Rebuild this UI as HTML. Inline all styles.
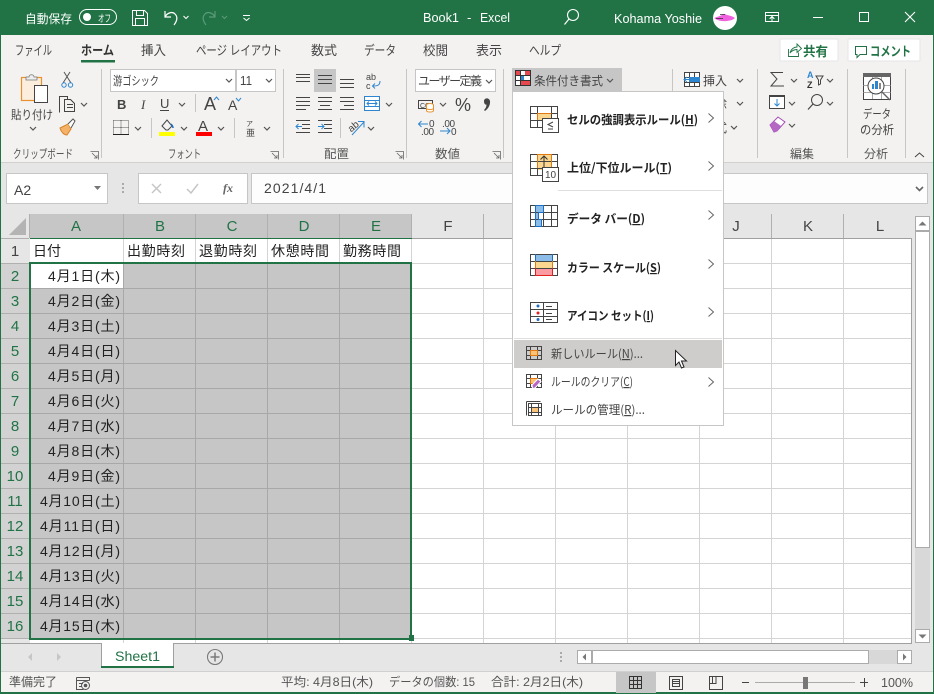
<!DOCTYPE html>
<html><head><meta charset="utf-8"><style>
html,body{margin:0;padding:0;background:#fff;overflow:hidden}
svg{display:block;position:absolute;left:0;top:0}
text{font-family:"Liberation Sans","Noto Sans CJK JP",sans-serif;fill:#444;font-size:12px}
.r{shape-rendering:crispEdges}
.c{font-size:14px;fill:#222}
.h{font-size:15px;fill:#444;text-anchor:middle}
.s{fill:#217346}
.w{fill:#fff}
.m{fill:#222;font-weight:bold;font-size:12px;font-family:"Noto Sans CJK JP",sans-serif}
.n{fill:#444;font-size:12px;font-family:"Noto Sans CJK JP",sans-serif}
.u{text-decoration:underline}
.l{fill:#555;font-size:12px}
.ln{fill:none;stroke:#444;stroke-width:1;shape-rendering:crispEdges}
.ch{fill:none;stroke:#555;stroke-width:1.2}
.gr{stroke:#d4d4d4;stroke-width:1;shape-rendering:crispEdges}
.gs{stroke:#a8a8a8;stroke-width:1;shape-rendering:crispEdges}
</style></head><body>
<svg width="934" height="694" viewBox="0 0 934 694" xmlns="http://www.w3.org/2000/svg">
<!-- backgrounds -->
<rect class="r" width="934" height="694" fill="#217346"/>
<rect class="r" x="1" y="35" width="932" height="128" fill="#f3f2f1"/>
<rect class="r" x="1" y="162" width="932" height="1" fill="#d2d0ce"/>
<rect class="r" x="1" y="163" width="932" height="508" fill="#e6e6e6"/>
<rect class="r" x="1" y="671" width="932" height="21" fill="#f3f2f1"/>
<rect class="r" x="1" y="671" width="932" height="1" fill="#d0d0d0"/>

<!-- title bar -->
<text x="25" y="23" class="w" textLength="47" lengthAdjust="spacingAndGlyphs" style="font-size:12px">自動保存</text>
<rect x="79.500" y="9.500" width="37" height="15" rx="7.500" fill="none" stroke="#fff"/>
<circle cx="87" cy="17" r="4" fill="#fff"/>
<text x="98" y="22" class="w" style="font-size:10px" textLength="13" lengthAdjust="spacingAndGlyphs">オフ</text>
<path d="M132.500 10.500h12l3 3v12h-15zM136.500 10.500v5h7v-5M135.500 25.500v-7h9v7" fill="none" stroke="#fff"/>
<path d="M165 11v6h6M165 17c2-4 7-6 10-3 3 3 2 7-1 11" fill="none" stroke="#fff" stroke-width="1.200"/>
<path d="M183.500 16l2.500 2.500 2.500-2.500" fill="none" stroke="#fff"/>
<path d="M215 11v6h-6M215 17c-2-4-7-6-10-3-3 3-2 7 1 11" fill="none" stroke="#5a9a78" stroke-width="1.200"/>
<path d="M222 16l2.500 2.500 2.500-2.500" fill="none" stroke="#5a9a78"/>
<path d="M243 15.500h7M243.500 18l3 2.500 3-2.500" fill="none" stroke="#fff"/>
<text x="423" y="22" class="w" style="font-size:13px" textLength="36" lengthAdjust="spacingAndGlyphs">Book1</text>
<text x="467" y="22" class="w" style="font-size:13px">-</text>
<text x="480" y="22" class="w" style="font-size:13px" textLength="30" lengthAdjust="spacingAndGlyphs">Excel</text>
<circle cx="573" cy="15" r="5.500" fill="none" stroke="#fff" stroke-width="1.100"/><path d="M569 19l-4.500 5.500" stroke="#fff" stroke-width="1.200"/>
<text x="614" y="23" class="w" style="font-size:13px" textLength="88" lengthAdjust="spacingAndGlyphs">Kohama Yoshie</text>
<circle cx="725" cy="18" r="12" fill="#fff"/>
<path d="M714 18c3-1 6-2 8-3 2-1.500 3-1 5 0 3 .5 6 1.500 8 3-2 2-5 2.500-8 3-4 .5-9 0-13-3z" fill="#ef5fe0"/>
<path d="M716 18.500h7M720 14.500h5" stroke="#333" stroke-width=".7"/>
<path class="r" d="M765.500 12.500h13v9h-13zM765.500 15.500h13M772 21v-4M769.500 19l2.500-2.500 2.500 2.500" fill="none" stroke="#fff"/>
<path class="r" d="M813 17.500h10" stroke="#fff"/>
<rect class="r" x="859.500" y="12.500" width="9" height="9" fill="none" stroke="#fff"/>
<path d="M905 12l10 10M915 12l-10 10" stroke="#fff" stroke-width="1.100"/>

<!-- tabs -->
<text x="15" y="55" style="font-size:13px" textLength="37" lengthAdjust="spacingAndGlyphs">ファイル</text>
<text x="81" y="55" style="font-size:13px;font-weight:bold;fill:#333" textLength="33" lengthAdjust="spacingAndGlyphs">ホーム</text>
<rect class="r" x="81" y="60" width="34" height="2.500" fill="#217346"/>
<text x="141" y="55" style="font-size:13px" textLength="25" lengthAdjust="spacingAndGlyphs">挿入</text>
<text x="196" y="55" style="font-size:13px" textLength="86" lengthAdjust="spacingAndGlyphs">ページ レイアウト</text>
<text x="311" y="55" style="font-size:13px" textLength="26" lengthAdjust="spacingAndGlyphs">数式</text>
<text x="364" y="55" style="font-size:13px" textLength="32" lengthAdjust="spacingAndGlyphs">データ</text>
<text x="423" y="55" style="font-size:13px" textLength="25" lengthAdjust="spacingAndGlyphs">校閲</text>
<text x="476" y="55" style="font-size:13px" textLength="26" lengthAdjust="spacingAndGlyphs">表示</text>
<text x="529" y="55" style="font-size:13px" textLength="32" lengthAdjust="spacingAndGlyphs">ヘルプ</text>
<rect x="780" y="39" width="58" height="22" rx="1" fill="#fff" stroke="#e6e6e6"/>
<rect x="848" y="39" width="72" height="22" rx="1" fill="#fff" stroke="#e6e6e6"/>
<path d="M788.500 49v7.500h10v-4M790 53c1-4 4-6 7-6v-3l4.500 4.500-4.500 4v-3c-3 0-5 1-7 3.500z" fill="none" stroke="#217346" stroke-width=".9"/>
<text x="803" y="56" style="font-size:13px;font-weight:bold;fill:#217346" textLength="25" lengthAdjust="spacingAndGlyphs">共有</text>
<path d="M855.500 46.500h11v8h-6.500l-3 3v-3h-1.500z" fill="none" stroke="#217346"/>
<text x="870" y="56" style="font-size:13px;font-weight:bold;fill:#217346" textLength="41" lengthAdjust="spacingAndGlyphs">コメント</text>

<!-- ribbon separators -->
<g class="r" fill="#c8c6c4">
<rect x="101" y="69" width="1" height="89"/><rect x="283" y="69" width="1" height="89"/><rect x="406" y="69" width="1" height="89"/><rect x="503" y="69" width="1" height="89"/><rect x="672" y="69" width="1" height="89"/><rect x="757" y="69" width="1" height="89"/><rect x="847" y="69" width="1" height="89"/><rect x="905" y="69" width="1" height="89"/>
<rect x="195" y="94" width="1" height="18"/><rect x="151" y="118" width="1" height="20"/><rect x="234" y="118" width="1" height="20"/><rect x="340" y="118" width="1" height="20"/>
</g>
<!-- clipboard -->
<rect x="21.500" y="77.500" width="20" height="23" fill="#fbeedd" stroke="#e8912d" stroke-width="1.200"/>
<path d="M26 80v-3h3c0-3 5-3 5 0h3v3z" fill="#eee" stroke="#777" stroke-width=".8"/>
<rect class="r" x="34.500" y="85.500" width="13" height="17" fill="#fff" stroke="#444"/>
<text x="11" y="119" fill="#444" textLength="42" lengthAdjust="spacingAndGlyphs">貼り付け</text>
<path class="ch" d="M30 127l3 3 3-3"/>
<path d="M64 72l7 11M70 72l-7 11" stroke="#555" fill="none"/><circle cx="64" cy="85" r="2.200" fill="none" stroke="#2e86d0"/><circle cx="70.500" cy="85" r="2.200" fill="none" stroke="#2e86d0"/>
<path class="ln" d="M59.500 112.500v-16h8v3M64.500 99.500h6l4 4v8h-10zM67 104.500h6M67 107.500h6"/>
<path class="ch" d="M81 103l3 3 3-3"/>
<path d="M60 128l8-4 3 5-4 6c-3 0-6-3-7-7z" fill="#f3b267" stroke="#d9822b"/><path d="M68 124l5-5 2 2-4 7" fill="#fff" stroke="#555"/>
<text x="13" y="158" class="l" textLength="60" lengthAdjust="spacingAndGlyphs">クリップボード</text>
<path d="M90.500 151.500h8v8M92 153l5 5M97 155v3h-3" fill="none" stroke="#666" stroke-width=".8"/>

<!-- font group -->
<rect class="r" x="110.500" y="69.500" width="125" height="22" fill="#fff" stroke="#c6c6c6"/>
<rect class="r" x="236.500" y="69.500" width="39" height="22" fill="#fff" stroke="#c6c6c6"/>
<text x="113" y="85" fill="#333" textLength="46" lengthAdjust="spacingAndGlyphs">游ゴシック</text>
<path class="ch" d="M226 79l3 3 3-3M266 79l3 3 3-3"/>
<text x="240" y="85" fill="#333" style="font-size:13px" textLength="12" lengthAdjust="spacingAndGlyphs">11</text>
<text x="117" y="109" style="font-size:13px;font-weight:bold">B</text>
<text x="141" y="109" style="font-size:13px;font-style:italic;font-family:'Liberation Serif'">I</text>
<text x="160" y="108" style="font-size:13px">U</text><rect class="r" x="160" y="110" width="9" height="1" fill="#444"/>
<path class="ch" d="M179 103l3 3 3-3"/>
<text x="204" y="110" style="font-size:18px" fill="#444">A</text>
<path d="M214 100l2.500-3 2.500 3" fill="none" stroke="#2e86d0"/>
<text x="228" y="110" style="font-size:14px">A</text>
<path d="M236 98l2.500 3 2.500-3" fill="none" stroke="#2e86d0"/>
<path d="M113.500 120.500h15v13.500M113.500 120.500v13M121 120.500v13M113.500 127.500h15" fill="none" stroke="#555" stroke-dasharray="1 1" class="r"/>
<rect class="r" x="113" y="134" width="16" height="1" fill="#222"/>
<path class="ch" d="M135 127l3 3 3-3"/>
<path d="M162 126l5-6 5 6-4 4h-2z" fill="none" stroke="#444"/><path d="M171 124c1 1 2 2 2 4" stroke="#1b6ec2" stroke-width="1.500" fill="none"/>
<rect class="r" x="159" y="132" width="16" height="4" fill="#ffff00"/>
<path class="ch" d="M181 127l3 3 3-3"/>
<text x="198" y="131" style="font-size:15px" fill="#444">A</text>
<rect class="r" x="196" y="132" width="16" height="4" fill="#ff0000"/>
<path class="ch" d="M218 127l3 3 3-3"/>
<text x="246" y="126" style="font-size:7px" fill="#888">ア</text><text x="246" y="136" style="font-size:9px" fill="#888">亜</text>
<path class="ch" d="M264 127l3 3 3-3"/>
<text x="168" y="158" class="l" textLength="33" lengthAdjust="spacingAndGlyphs">フォント</text>
<path d="M270.500 151.500h8v8M272 153l5 5M277 155v3h-3" fill="none" stroke="#666" stroke-width=".8"/>

<!-- align group -->
<rect class="r" x="314" y="69" width="22" height="23" fill="#c6c6c6"/>
<path class="ln" d="M296 74.500h14M296 77.500h14M296 81.500h14"/>
<path class="ln" d="M318 75.500h14M318 79.500h14M318 83.500h14"/>
<path class="ln" d="M340 79.500h14M340 83.500h14M340 87.500h14"/>
<text x="366" y="80" style="font-size:9px" fill="#444">ab</text><text x="366" y="89" style="font-size:9px" fill="#444">c</text>
<path d="M380 81c0 4-2 5-7 5M375 83.500l-2.500 2.500 2.500 2.500" fill="none" stroke="#2e86d0"/>
<path class="ln" d="M296 97.500h14M296 101.500h14M296 105.500h14M296 109.500h10"/>
<path class="ln" d="M318 97.500h14M318 101.500h14M320 105.500h10M318 109.500h14"/>
<path class="ln" d="M340 97.500h14M340 101.500h14M344 105.500h10M340 109.500h14"/>
<path class="r" d="M364.500 96.500h15v14h-15zM364.500 100.500h15M364.500 106.500h15" fill="#fff" stroke="#2e86d0"/>
<path d="M367 103.500h10M369 101.500l-2 2 2 2M375 101.500l2 2-2 2" fill="none" stroke="#2e86d0"/>
<path class="ch" d="M386 103l3 3 3-3"/>
<path class="ln" d="M296 120.500h14M302 124.500h8M302 128.500h8M296 132.500h14"/><path d="M302 126.500h-6M298.500 124l-2.500 2.500 2.500 2.500" fill="none" stroke="#2e86d0"/>
<path class="ln" d="M318 120.500h14M324 124.500h8M324 128.500h8M318 132.500h14"/><path d="M318 126.500h6M321.500 124l2.500 2.500-2.500 2.500" fill="none" stroke="#2e86d0"/>
<text x="348" y="130" style="font-size:10px" transform="rotate(-40 353 127)" fill="#444">ab</text>
<path d="M352 135l12-13M358 121.500h6v6" fill="none" stroke="#2e86d0"/>
<path class="ch" d="M368 127l3 3 3-3"/>
<text x="324" y="158" class="l" textLength="25" lengthAdjust="spacingAndGlyphs">配置</text>
<path d="M395.500 151.500h8v8M397 153l5 5M402 155v3h-3" fill="none" stroke="#666" stroke-width=".8"/>

<!-- number group -->
<rect class="r" x="415.500" y="69.500" width="80" height="22" fill="#fff" stroke="#c6c6c6"/>
<text x="418" y="85" fill="#333" textLength="64" lengthAdjust="spacing">ユーザー定義</text>
<path class="ch" d="M486 80l3 3 3-3"/>
<rect class="r" x="418.500" y="100.500" width="14" height="8" fill="none" stroke="#444"/>
<text x="420" y="108" style="font-size:7px" fill="#333">CC</text>
<ellipse cx="430" cy="105" rx="3.500" ry="1.500" fill="#fff" stroke="#e8912d"/><path d="M426.500 105v5.500c0 2 7 2 7 0v-5.500M426.500 108c0 2 7 2 7 0" fill="#fff" stroke="#e8912d"/>
<path class="ch" d="M440 103l3 3 3-3"/>
<text x="455" y="111" style="font-size:18px" fill="#444">%</text>
<path d="M484 101c0-3 5-4 6 0 .5 4-2 8-5 10l-1-1c1.500-1.500 2.500-3 2.500-5.500-1.500.5-2.500-1-2.500-3.500z" fill="#444"/>
<path d="M428 124h-9M421.500 121l-3 3 3 3" fill="none" stroke="#2e86d0"/>
<text x="429" y="127" style="font-size:10px" fill="#444">0</text>
<text x="421" y="135" style="font-size:10px" fill="#444" textLength="13">.00</text>
<text x="442" y="127" style="font-size:10px" fill="#444" textLength="13">.00</text>
<path d="M440 131h10M447 128l3 3-3 3" fill="none" stroke="#2e86d0"/>
<text x="451" y="135" style="font-size:10px" fill="#444">0</text>
<text x="435" y="158" class="l" textLength="25" lengthAdjust="spacingAndGlyphs">数値</text>
<path d="M492.500 151.500h8v8M494 153l5 5M499 155v3h-3" fill="none" stroke="#666" stroke-width=".8"/>

<!-- right groups -->
<path class="r" d="M684.500 72.500h15v14h-15zM684.500 77.500h15M684.500 82.500h15M689.500 72.500v14M694.500 72.500v14" fill="#fff" stroke="#444"/>
<rect class="r" x="689" y="77" width="11" height="5" fill="#2e86d0"/><path d="M691 79.500h-7M687 77l-3 2.500 3 2.500" fill="none" stroke="#2e86d0"/>
<text x="703" y="85" fill="#444" textLength="24" lengthAdjust="spacingAndGlyphs">挿入</text>
<text x="703" y="108" fill="#444" textLength="24" lengthAdjust="spacingAndGlyphs">削除</text>
<text x="703" y="132" fill="#444" textLength="24" lengthAdjust="spacingAndGlyphs">書式</text>
<path class="ch" d="M737 79l3 3 3-3M737 102l3 3 3-3M731 126l3 3 3-3"/>
<path d="M783 72.500h-12l6 6.500-6 7h13" fill="none" stroke="#444"/>
<path class="ch" d="M791 79l3 3 3-3"/>
<text x="807" y="78" style="font-size:9px;font-weight:bold;fill:#2e86d0">A</text>
<text x="807" y="88" style="font-size:9px;font-weight:bold;fill:#333">Z</text>
<path d="M816 76h7l-2.500 4v4l-2 1v-5z" fill="none" stroke="#444"/>
<path class="ch" d="M827 79l3 3 3-3"/>
<rect class="r" x="769.500" y="95.500" width="15" height="13" fill="#fff" stroke="#444"/><rect class="r" x="769" y="95" width="16" height="2" fill="#444"/>
<path d="M777 99v7M774.500 103.500l2.500 2.500 2.500-2.500" fill="none" stroke="#2e86d0"/>
<path class="ch" d="M789 102l3 3 3-3"/>
<circle cx="817" cy="100" r="5.500" fill="none" stroke="#444"/><path d="M813 104l-5 5.500" stroke="#444" stroke-width="1.200"/>
<path class="ch" d="M827 102l3 3 3-3"/>
<path d="M770 125l8-8 7 5-8 9-3 1z" fill="#fff" stroke="#a74fb8"/><path d="M770 125l4-4 7 5-4 5-3 1z" fill="#b468c4"/>
<path class="ch" d="M789 124l3 3 3-3"/>
<text x="790" y="158" class="l" textLength="24" lengthAdjust="spacingAndGlyphs">編集</text>
<rect class="r" x="863.500" y="73.500" width="27" height="26" fill="#fff" stroke="#444"/><rect class="r" x="863" y="73" width="28" height="4" fill="#666"/>
<path class="r" d="M863.500 85.500h27M863.500 92.500h27M872.500 77v22M881.500 77v22" stroke="#aaa" fill="none"/>
<circle cx="876" cy="86" r="8" fill="#fff" stroke="#444"/><path d="M882 92l8 8" stroke="#666" stroke-width="1.500"/>
<rect class="r" x="872" y="84" width="2" height="5" fill="#2e86d0"/><rect class="r" x="875" y="81" width="3" height="8" fill="#2e86d0"/><rect class="r" x="879" y="83" width="2" height="6" fill="#888"/>
<text x="863" y="118" fill="#444" textLength="28" lengthAdjust="spacingAndGlyphs">データ</text>
<text x="860" y="134" fill="#444" textLength="34" lengthAdjust="spacingAndGlyphs">の分析</text>
<text x="864" y="158" class="l" textLength="24" lengthAdjust="spacingAndGlyphs">分析</text>
<path d="M915 157l4.500-4 4.500 4" fill="none" stroke="#444"/>

<!-- formula bar -->
<rect class="r" x="6.500" y="173.500" width="101" height="30" fill="#fff" stroke="#c6c6c6"/>
<rect class="r" x="138.500" y="173.500" width="109" height="30" fill="#fff" stroke="#c6c6c6"/>
<rect class="r" x="251.500" y="173.500" width="676" height="30" fill="#fdfdfd" stroke="#c6c6c6"/>
<text x="14" y="195" style="font-size:14px" fill="#444">A2</text>
<path d="M94 186h7l-3.500 4z" fill="#777"/>
<g class="r" fill="#aaa"><rect x="122" y="183" width="2" height="2"/><rect x="122" y="187" width="2" height="2"/><rect x="122" y="191" width="2" height="2"/></g>
<path d="M152 184l9 9M161 184l-9 9" stroke="#c6c6c6" stroke-width="1.500"/>
<path d="M187 189l4 4 7-9" fill="none" stroke="#c6c6c6" stroke-width="1.500"/>
<text x="223" y="192" style="font-size:12px;font-style:italic;font-weight:bold;font-family:'Liberation Serif';fill:#666">fx</text>
<text x="264" y="193" style="font-size:14px" fill="#666" textLength="62" lengthAdjust="spacing">2021/4/1</text>
<path d="M916 187l3.500 3.500 3.500-3.500" fill="none" stroke="#666" stroke-width="1.600"/>

<!-- headers -->
<path d="M26 218v17H9z" fill="#b4b4b4"/>
<rect class="r" x="30" y="214" width="382" height="24" fill="#c6c6c6"/>
<rect class="r" x="1" y="264" width="28" height="375" fill="#d2d2d2"/>
<g class="r" fill="#b0b0b0">
<rect x="29" y="214" width="1" height="24"/><rect x="123" y="214" width="1" height="24"/><rect x="195" y="214" width="1" height="24"/><rect x="267" y="214" width="1" height="24"/><rect x="339" y="214" width="1" height="24"/><rect x="411" y="214" width="1" height="24"/><rect x="483" y="214" width="1" height="24"/><rect x="555" y="214" width="1" height="24"/><rect x="627" y="214" width="1" height="24"/><rect x="699" y="214" width="1" height="24"/><rect x="771" y="214" width="1" height="24"/><rect x="843" y="214" width="1" height="24"/>
<rect x="1" y="238" width="28" height="1"/><rect x="1" y="263" width="28" height="1"/><rect x="1" y="288" width="28" height="1"/><rect x="1" y="313" width="28" height="1"/><rect x="1" y="338" width="28" height="1"/><rect x="1" y="363" width="28" height="1"/><rect x="1" y="388" width="28" height="1"/><rect x="1" y="413" width="28" height="1"/><rect x="1" y="438" width="28" height="1"/><rect x="1" y="463" width="28" height="1"/><rect x="1" y="488" width="28" height="1"/><rect x="1" y="513" width="28" height="1"/><rect x="1" y="538" width="28" height="1"/><rect x="1" y="563" width="28" height="1"/><rect x="1" y="588" width="28" height="1"/><rect x="1" y="613" width="28" height="1"/><rect x="1" y="638" width="28" height="1"/>
</g>
<text x="76" y="231" class="h s">A</text><text x="160" y="231" class="h s">B</text><text x="232" y="231" class="h s">C</text><text x="304" y="231" class="h s">D</text><text x="376" y="231" class="h s">E</text>
<text x="448" y="231" class="h">F</text><text x="520" y="231" class="h">G</text><text x="592" y="231" class="h">H</text><text x="664" y="231" class="h">I</text><text x="736" y="231" class="h">J</text><text x="808" y="231" class="h">K</text><text x="880" y="231" class="h">L</text>
<text x="15" y="256" class="h">1</text>
<text x="15" y="281" class="h s">2</text><text x="15" y="306" class="h s">3</text><text x="15" y="331" class="h s">4</text><text x="15" y="356" class="h s">5</text><text x="15" y="381" class="h s">6</text><text x="15" y="406" class="h s">7</text><text x="15" y="431" class="h s">8</text><text x="15" y="456" class="h s">9</text><text x="15" y="481" class="h s">10</text><text x="15" y="506" class="h s">11</text><text x="15" y="531" class="h s">12</text><text x="15" y="556" class="h s">13</text><text x="15" y="581" class="h s">14</text><text x="15" y="606" class="h s">15</text><text x="15" y="631" class="h s">16</text>

<!-- sheet -->
<rect class="r" x="30" y="239" width="882" height="404" fill="#fff"/>
<g class="gr">
<path d="M123.500 239V643M195.500 239V643M267.500 239V643M339.500 239V643M411.500 239V643M483.500 239V643M555.500 239V643M627.500 239V643M699.500 239V643M771.500 239V643M843.500 239V643"/>
<path d="M30 263.500H911M30 288.500H911M30 313.500H911M30 338.500H911M30 363.500H911M30 388.500H911M30 413.500H911M30 438.500H911M30 463.500H911M30 488.500H911M30 513.500H911M30 538.500H911M30 563.500H911M30 588.500H911M30 613.500H911M30 638.500H911"/>
</g>
<rect class="r" x="30" y="264" width="380" height="374" fill="#c6c6c6"/>
<rect class="r" x="31" y="264" width="92" height="24" fill="#fff"/>
<g class="gs">
<path d="M123.500 264V638M195.500 264V638M267.500 264V638M339.500 264V638"/>
<path d="M124 288.500H410M30 313.500H410M30 338.500H410M30 363.500H410M30 388.500H410M30 413.500H410M30 438.500H410M30 463.500H410M30 488.500H410M30 513.500H410M30 538.500H410M30 563.500H410M30 588.500H410M30 613.500H410M30 288.500H123"/>
</g>
<rect class="r" x="911" y="238" width="1" height="405" fill="#a0a0a0"/>
<rect class="r" x="30" y="238" width="882" height="1" fill="#a0a0a0"/>
<rect class="r" x="1" y="643" width="911" height="1" fill="#a0a0a0"/>
<rect class="r" x="30" y="238" width="382" height="1" fill="#217346"/>

<text x="33" y="256" class="c" textLength="28">日付</text>
<text x="127" y="256" class="c" textLength="58" lengthAdjust="spacing">出勤時刻</text>
<text x="199" y="256" class="c" textLength="58" lengthAdjust="spacing">退勤時刻</text>
<text x="271" y="256" class="c" textLength="58" lengthAdjust="spacing">休憩時間</text>
<text x="343" y="256" class="c" textLength="58" lengthAdjust="spacing">勤務時間</text>
<text x="48" y="281" class="c" textLength="72" lengthAdjust="spacing">4月1日(木)</text>
<text x="48" y="306" class="c" textLength="72" lengthAdjust="spacing">4月2日(金)</text>
<text x="48" y="331" class="c" textLength="72" lengthAdjust="spacing">4月3日(土)</text>
<text x="48" y="356" class="c" textLength="72" lengthAdjust="spacing">4月4日(日)</text>
<text x="48" y="381" class="c" textLength="72" lengthAdjust="spacing">4月5日(月)</text>
<text x="48" y="406" class="c" textLength="72" lengthAdjust="spacing">4月6日(火)</text>
<text x="48" y="431" class="c" textLength="72" lengthAdjust="spacing">4月7日(水)</text>
<text x="48" y="456" class="c" textLength="72" lengthAdjust="spacing">4月8日(木)</text>
<text x="48" y="481" class="c" textLength="72" lengthAdjust="spacing">4月9日(金)</text>
<text x="40" y="506" class="c" textLength="80" lengthAdjust="spacing">4月10日(土)</text>
<text x="40" y="531" class="c" textLength="80" lengthAdjust="spacing">4月11日(日)</text>
<text x="40" y="556" class="c" textLength="80" lengthAdjust="spacing">4月12日(月)</text>
<text x="40" y="581" class="c" textLength="80" lengthAdjust="spacing">4月13日(火)</text>
<text x="40" y="606" class="c" textLength="80" lengthAdjust="spacing">4月14日(水)</text>
<text x="40" y="631" class="c" textLength="80" lengthAdjust="spacing">4月15日(木)</text>

<!-- selection border -->
<g class="r" fill="#217346">
<rect x="29" y="262" width="383" height="2"/>
<rect x="29" y="262" width="2" height="378"/>
<rect x="29" y="638" width="383" height="2"/>
<rect x="410" y="262" width="2" height="378"/>
<rect x="409" y="635" width="5" height="6"/>
</g>

<!-- vertical scrollbar -->
<rect class="r" x="915" y="216" width="15" height="427" fill="#d8d8d8"/>
<rect class="r" x="915.500" y="216.500" width="14" height="14" fill="#fff" stroke="#ababab"/>
<path d="M918.500 225.500l4-4 4 4z" fill="#777"/>
<rect class="r" x="915.500" y="231.500" width="14" height="316" fill="#fff" stroke="#ababab"/>
<rect class="r" x="915.500" y="629.500" width="14" height="13" fill="#fff" stroke="#ababab"/>
<path d="M918.500 634.500l4 4 4-4z" fill="#777"/>

<!-- tab bar -->
<path class="r" d="M101.500 643.500v24h72v-24" fill="#fff" stroke="#a0a0a0"/>
<rect class="r" x="102" y="643" width="71" height="2" fill="#fff"/>
<rect class="r" x="101" y="666" width="73" height="2" fill="#217346"/>
<text x="115" y="661" style="font-size:13.500px;fill:#217346" textLength="45" lengthAdjust="spacingAndGlyphs">Sheet1</text>
<path d="M32 653v8l-4-4zM57 653v8l4-4z" fill="#c6c6c6"/>
<circle cx="215" cy="657" r="7.500" fill="none" stroke="#7a7a7a" stroke-width="1.100"/>
<path d="M210.500 657h9M215 652.500v9" stroke="#7a7a7a" stroke-width="1.500"/>
<g class="r" fill="#aaa"><rect x="560" y="652" width="2" height="2"/><rect x="560" y="656" width="2" height="2"/><rect x="560" y="660" width="2" height="2"/></g>
<rect class="r" x="577" y="650" width="335" height="14" fill="#d8d8d8"/>
<rect class="r" x="577.500" y="650.500" width="14" height="13" fill="#fff" stroke="#ababab"/>
<path d="M586 653.500v7l-3.500-3.500z" fill="#777"/>
<rect class="r" x="592.500" y="650.500" width="276" height="13" fill="#fff" stroke="#ababab"/>
<rect class="r" x="897.500" y="650.500" width="14" height="13" fill="#fff" stroke="#ababab"/>
<path d="M903 653.500v7l3.500-3.500z" fill="#777"/>

<!-- status bar -->
<text x="9" y="686" class="l" textLength="48" lengthAdjust="spacingAndGlyphs">準備完了</text>
<path class="r" d="M76.500 677.500h13v3M76.500 677.500v12h7M76.500 680.500h13M79 683.500h4M79 686.500h3" fill="none" stroke="#555"/>
<circle cx="85.500" cy="685.500" r="4" fill="none" stroke="#555"/><circle cx="85.500" cy="685.500" r="1.800" fill="#555"/>
<text x="281" y="686" class="l" textLength="92" lengthAdjust="spacingAndGlyphs">平均: 4月8日(木)</text>
<text x="389" y="686" class="l" textLength="86" lengthAdjust="spacingAndGlyphs">データの個数: 15</text>
<text x="491" y="686" class="l" textLength="92" lengthAdjust="spacingAndGlyphs">合計: 2月2日(木)</text>
<rect class="r" x="616" y="672" width="40" height="21" fill="#c6c6c6"/>
<path class="r" d="M629.500 676.500h12v12h-12zM629.500 680.500h12M629.500 684.500h12M633.500 676.500v12M637.500 676.500v12" fill="none" stroke="#333"/>
<path class="r" d="M669.500 676.500h13v13h-13zM672.500 679.500h7v7h-7zM673 681.500h6M673 683.500h6" fill="none" stroke="#444"/>
<path class="r" d="M709.500 676.500h13v13h-13zM709.500 683.500h6.500v-7M716 683.500v-7M712.500 676.500v7" fill="none" stroke="#444"/>
<rect class="r" x="742" y="682" width="7" height="1" fill="#444"/>
<rect class="r" x="755" y="682" width="100" height="1" fill="#aaa"/>
<rect class="r" x="803" y="677" width="5" height="12" fill="#777"/>
<path class="r" d="M860 682.500h8M864.500 678v9" stroke="#444" fill="none"/>
<text x="881" y="687" class="l" style="font-size:13px" textLength="32" lengthAdjust="spacingAndGlyphs">100%</text>

<!-- conditional formatting button -->
<rect class="r" x="512" y="68" width="110" height="24" fill="#c6c6c6"/>
<path class="r" d="M515.500 70.500h15v15h-15z" fill="#fff" stroke="#333"/>
<rect class="r" x="516" y="71" width="4" height="4" fill="#e7474f"/><rect class="r" x="521" y="76" width="3" height="4" fill="#2e86d0"/><rect class="r" x="525" y="71" width="5" height="4" fill="#e7474f"/><rect class="r" x="521" y="81" width="9" height="4" fill="#e7474f"/>
<path class="r" d="M520.500 70.500v15M515.500 75.500h15M515.500 80.500h15" fill="none" stroke="#333"/>
<text x="534" y="85" fill="#333" textLength="69" lengthAdjust="spacingAndGlyphs">条件付き書式</text>
<path class="ch" d="M607 79l3 3 3-3"/>

<!-- menu -->
<rect class="r" x="512.500" y="91.500" width="211" height="334" fill="#fff" stroke="#c6c6c6"/>
<rect class="r" x="514" y="340" width="208" height="28" fill="#cfcdcb"/>
<rect class="r" x="558" y="190" width="164" height="1" fill="#e1dfdd"/>
<rect class="r" x="514" y="338" width="208" height="1" fill="#e1dfdd"/>

<!-- item 1 -->
<rect class="r" x="537" y="113" width="14" height="7" fill="#fbd68e"/>
<path class="r" d="M530.500 106.500h27v21h-27zM530.500 113.500h27M530.500 120.500h27M537.500 106.500v21M551.500 106.500v21" fill="none" stroke="#444"/>
<path class="r" d="M537.500 120v-6.500h14" fill="none" stroke="#e07a10"/>
<rect class="r" x="542.500" y="118.500" width="16" height="14" fill="#fff" stroke="#444"/>
<path d="M553 122l-5 2.500 5 2.500M548 129h5" fill="none" stroke="#444"/>
<text x="567" y="124" class="m" textLength="131" lengthAdjust="spacingAndGlyphs">セルの強調表示ルール(<tspan class="u">H</tspan>)</text>
<path d="M708.500 113.500l5 4.500-5 4.500" fill="none" stroke="#666"/>
<!-- item 2 -->
<rect class="r" x="537" y="154" width="14" height="16" fill="#fbd68e"/>
<path class="r" d="M530.500 154.500h27v21h-27zM530.500 161.500h27M530.500 168.500h27M537.500 154.500v21M551.500 154.500v21" fill="none" stroke="#444"/>
<path class="r" d="M537.500 168v-13.500h14v13.500" fill="none" stroke="#e07a10"/>
<path d="M544 167v-11M540.500 159.500l3.500-3.500 3.500 3.500" fill="none" stroke="#333"/>
<rect class="r" x="542.500" y="167.500" width="16" height="14" fill="#fff" stroke="#444"/>
<text x="545" y="178" style="font-size:10px" fill="#555">10</text>
<text x="567" y="172" class="m" textLength="105" lengthAdjust="spacingAndGlyphs">上位/下位ルール(<tspan class="u">T</tspan>)</text>
<path d="M708.500 161.500l5 4.500-5 4.500" fill="none" stroke="#666"/>
<!-- item 3 -->
<rect class="r" x="536" y="206" width="8" height="6" fill="#8bbde8"/><rect class="r" x="536" y="213" width="3" height="6" fill="#8bbde8"/><rect class="r" x="536" y="220" width="5" height="6" fill="#8bbde8"/>
<path class="r" d="M530.500 205.500h27v21h-27zM530.500 212.500h27M530.500 219.500h27M543.500 205.500v21M551.500 205.500v21" fill="none" stroke="#444"/>
<path class="r" d="M535.500 205.500h8v7h-5v7h3v7h-6z" fill="none" stroke="#1b6ec2"/>
<text x="567" y="223" class="m" textLength="78" lengthAdjust="spacingAndGlyphs">データ バー(<tspan class="u">D</tspan>)</text>
<path d="M708.500 210.500l5 4.500-5 4.500" fill="none" stroke="#666"/>
<!-- item 4 -->
<rect class="r" x="535" y="254" width="18" height="7" fill="#8bbde8"/><rect class="r" x="535" y="261" width="18" height="7" fill="#fbd68e"/><rect class="r" x="535" y="268" width="18" height="7" fill="#fb9aa0"/>
<path class="r" d="M530.500 254.500h27v21h-27zM530.500 261.500h27M530.500 268.500h27" fill="none" stroke="#444"/>
<path class="r" d="M535.500 254v7M552.500 254v7" stroke="#1b6ec2"/><path class="r" d="M535.500 261v7M552.500 261v7" stroke="#e07a10"/><path class="r" d="M535.500 268v7M552.500 268v7M535 275.500h18" stroke="#e02020"/>
<text x="567" y="272" class="m" textLength="94" lengthAdjust="spacingAndGlyphs">カラー スケール(<tspan class="u">S</tspan>)</text>
<path d="M708.500 259.500l5 4.500-5 4.500" fill="none" stroke="#666"/>
<!-- item 5 -->
<path class="r" d="M530.500 302.500h27v20h-27zM530.500 309.500h27M530.500 316.500h27M543.500 302.500v20" fill="none" stroke="#444"/>
<circle cx="538" cy="306" r="1.500" fill="#1b6ec2"/><circle cx="538" cy="313" r="1.500" fill="#e02020"/><circle cx="538" cy="319.500" r="1.500" fill="#1b6ec2"/>
<path class="r" d="M546 306.500h6M546 313.500h6M546 319.500h6" stroke="#444" fill="none"/>
<text x="567" y="320" class="m" textLength="87" lengthAdjust="spacingAndGlyphs">アイコン セット(<tspan class="u">I</tspan>)</text>
<path d="M708.500 307.500l5 4.500-5 4.500" fill="none" stroke="#666"/>
<!-- small items -->
<rect class="r" x="531" y="351" width="6" height="4" fill="#fbc27a"/>
<path class="r" d="M526.500 346.500h15v13h-15zM526.500 350.500h15M526.500 355.500h15M530.500 346.500v13M537.500 346.500v13" fill="none" stroke="#444"/>
<path class="r" d="M530.500 350.500h7v5h-7z" fill="none" stroke="#e07a10"/>
<text x="551" y="358" class="n" textLength="92" lengthAdjust="spacingAndGlyphs">新しいルール(<tspan class="u">N</tspan>)...</text>
<rect class="r" x="531" y="379" width="6" height="4" fill="#fbc27a"/>
<path class="r" d="M526.500 374.500h15v13h-15zM526.500 378.500h15M526.500 383.500h15M530.500 374.500v13M537.500 374.500v13" fill="none" stroke="#444"/>
<path class="r" d="M530.500 378.500h7v5h-7z" fill="none" stroke="#e07a10"/>
<path d="M532 385l6-6 3 2.500-6 6.500-2.500.5z" fill="#b468c4" stroke="#fff"/>
<text x="551" y="386" class="n" textLength="82" lengthAdjust="spacingAndGlyphs">ルールのクリア(<tspan class="u">C</tspan>)</text>
<path d="M708.500 377.500l5 4.500-5 4.500" fill="none" stroke="#666"/>
<rect class="r" x="532" y="408" width="6" height="4" fill="#fbc27a"/>
<path class="r" d="M528.500 403.500h13v12h-13zM528.500 407.500h13M528.500 412.500h13M531.500 403.500v12M538.500 403.500v12M526.500 401.500h14M526.500 401.500v14" fill="none" stroke="#444"/>
<text x="551" y="414" class="n" textLength="94" lengthAdjust="spacingAndGlyphs">ルールの管理(<tspan class="u">R</tspan>)...</text>

<!-- cursor -->
<path d="M675.500 350.500v15l3.500-3.500 2.500 6 2.500-1-2.500-6h5z" fill="#fff" stroke="#222" stroke-width="1"/>
</svg>
</body></html>
